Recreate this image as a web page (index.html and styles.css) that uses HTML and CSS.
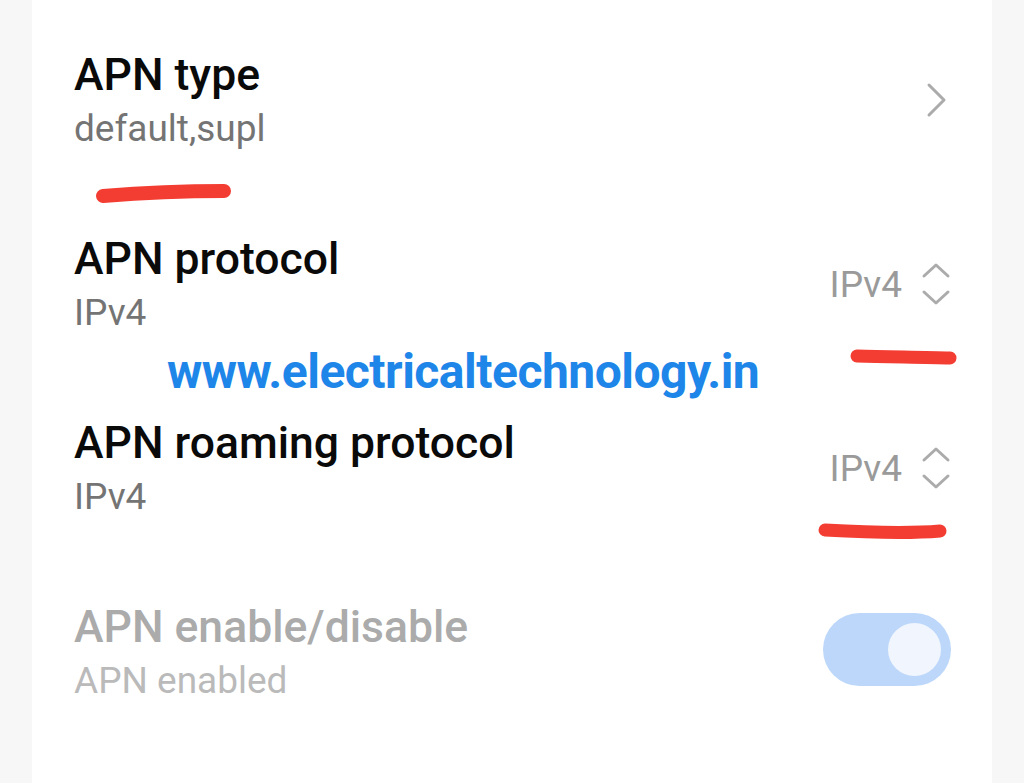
FILE: index.html
```html
<!DOCTYPE html>
<html>
<head>
<meta charset="utf-8">
<link rel="stylesheet" href="styles.css">
</head>
<body>
<div class="card">
  <div class="row">
    <div class="text">
      <div class="title">APN type</div>
      <div class="sub">default,supl</div>
    </div>
    <svg class="chevron" width="24" height="36" viewBox="0 0 24 36"><path d="M4 3 L19 18 L4 33" fill="none" stroke="#ababab" stroke-width="3" stroke-linecap="round" stroke-linejoin="round"/></svg>
  </div>
  <div class="row">
    <div class="text">
      <div class="title">APN protocol</div>
      <div class="sub">IPv4</div>
    </div>
    <div class="value">IPv4
      <svg class="updown" width="30" height="44" viewBox="0 0 30 44"><path d="M3 14 L15 3 L27 14 M3 30 L15 41 L27 30" fill="none" stroke="#ababab" stroke-width="3" stroke-linecap="round" stroke-linejoin="round"/></svg>
    </div>
  </div>
  <div class="row">
    <div class="text">
      <div class="title">APN roaming protocol</div>
      <div class="sub">IPv4</div>
    </div>
    <div class="value">IPv4
      <svg class="updown" width="30" height="44" viewBox="0 0 30 44"><path d="M3 14 L15 3 L27 14 M3 30 L15 41 L27 30" fill="none" stroke="#ababab" stroke-width="3" stroke-linecap="round" stroke-linejoin="round"/></svg>
    </div>
  </div>
  <div class="row disabled">
    <div class="text">
      <div class="title">APN enable/disable</div>
      <div class="sub">APN enabled</div>
    </div>
    <div class="toggle"><div class="knob"></div></div>
  </div>

  <div class="watermark">www.electricaltechnology.in</div>
  <svg class="marks" width="1024" height="783" viewBox="0 0 1024 783">
    <path d="M103 196 C140 193 190 191 224 191" fill="none" stroke="#f43d32" stroke-width="14" stroke-linecap="round"/>
    <path d="M857 356 C890 357 925 357 950 358" fill="none" stroke="#f43d32" stroke-width="13" stroke-linecap="round"/>
    <path d="M825 530 C860 532 905 534 940 531" fill="none" stroke="#f43d32" stroke-width="13" stroke-linecap="round"/>
  </svg>
</div>
</body>
</html>
```

FILE: styles.css
```css
html, body {
  margin: 0;
  padding: 0;
  background: #f7f7f7;
  font-family: Roboto, "Liberation Sans", sans-serif;
}
.card {
  position: relative;
  margin: 0 32px;
  width: 960px;
  height: 783px;
  background: #ffffff;
  box-sizing: border-box;
  padding: 8px 41px 0 42px;
}
.row {
  display: flex;
  align-items: center;
  justify-content: space-between;
  padding: 41px 0;
  height: 184px;
  box-sizing: border-box;
}
.title {
  font-size: 44.5px;
  font-weight: 500;
  line-height: 52px;
  color: #0a0a0a;
}
.sub {
  font-size: 37px;
  line-height: 44px;
  margin-top: 6px;
  color: #747474;
}
.chevron {
  margin-right: 2px;
}
.value {
  display: flex;
  align-items: center;
  gap: 19px;
  font-size: 37px;
  color: #9a9a9a;
}
.disabled .title {
  color: #ababab;
}
.disabled .sub {
  color: #bababa;
}
.toggle {
  width: 128px;
  height: 73px;
  border-radius: 37px;
  background: #bcd7fa;
  display: flex;
  align-items: center;
  justify-content: flex-end;
  padding-right: 10px;
  box-sizing: border-box;
  margin-top: -6px;
}
.knob {
  width: 53px;
  height: 53px;
  border-radius: 50%;
  background: #f0f5fe;
}
.watermark {
  position: absolute;
  left: 135px;
  top: 348px;
  font-size: 48px;
  line-height: 1;
  font-weight: 700;
  color: #1e86e8;
  letter-spacing: -0.5px;
}
.marks {
  position: absolute;
  left: -32px;
  top: 0;
  pointer-events: none;
}
```
